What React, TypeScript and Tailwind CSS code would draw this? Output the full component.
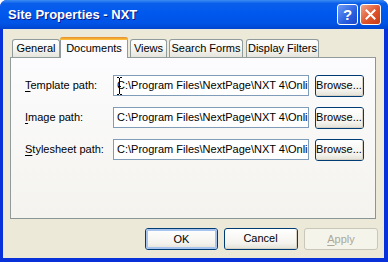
const ui = { fontFamily: '"Liberation Sans", Arial, sans-serif' };

const tabs = [
  { label: "General", w: "w-[48px]", ml: "ml-0" },
  { label: "Documents", w: "w-[68px]", ml: "ml-0", active: true },
  { label: "Views", w: "w-[37px]", ml: "ml-[2px]" },
  { label: "Search Forms", w: "w-[74px]", ml: "ml-[2px]" },
  { label: "Display Filters", w: "w-[73px]", ml: "ml-[3px]" },
];

const rows = [
  { key: "T", rest: "emplate path:", caret: true },
  { key: "I", rest: "mage path:" },
  { key: "S", rest: "tylesheet path:" },
];

function XpButton({ children, w, focus, disabled }: { children: React.ReactNode; w: string; focus?: boolean; disabled?: boolean }) {
  if (disabled) {
    return (
      <div className={`${w} h-[22px] rounded-[3px] border border-[#C9C7BA] bg-[#F5F4EA] flex items-center justify-center text-[11px] text-[#ACA899]`}>
        {children}
      </div>
    );
  }
  return (
    <div className={`${w} h-[22px] rounded-[3px] border border-[#003C74] bg-[linear-gradient(#FFFFFF,#F4F3EE_70%,#E3E1D6)] flex items-center justify-center text-[11px] text-black`}>
      <div className={`w-full h-full rounded-[2px] flex items-center justify-center ${focus ? "border-2 border-[#A8C4EE]" : "border-b border-r border-[#D6D0C5]"}`}>
        {children}
      </div>
    </div>
  );
}

export default function App() {
  return (
    <div style={ui} className="w-[388px] h-[262px] flex flex-col bg-[#0831D9] rounded-t-[7px] overflow-hidden">
      {/* title bar */}
      <div className="h-[29px] flex items-center pl-[8px] pr-[7px] bg-[linear-gradient(#3C8CF3,#0A5FEA_12%,#0058EE_45%,#0054E6_80%,#0045CF)]">
        <span className="flex-1 text-white font-bold text-[13px] [text-shadow:1px_1px_0_#0A1883]">Site Properties - NXT</span>
        <div className="w-[21px] h-[21px] rounded-[3px] border border-white bg-[linear-gradient(135deg,#6E9BF5,#2A5FE0_60%,#1B47C8)] flex items-center justify-center text-white font-bold text-[15px] leading-none">
          ?
        </div>
        <div className="ml-[2px] w-[21px] h-[21px] rounded-[3px] border border-white bg-[linear-gradient(135deg,#F0A48A,#E0532B_55%,#C63A16)] flex items-center justify-center">
          <svg width="11" height="11" viewBox="0 0 11 11">
            <path d="M1.5 1.5 L9.5 9.5 M9.5 1.5 L1.5 9.5" stroke="white" strokeWidth="2" strokeLinecap="square" />
          </svg>
        </div>
      </div>

      {/* client */}
      <div className="flex-1 ml-[3px] mr-[4px] mb-[4px] bg-[#ECE9D8] flex flex-col pt-[8px] pl-[7px] pr-[8px]">
        <div className="flex items-end h-[20px] pl-[2px] text-[11px] text-black">
          {tabs.map((t) =>
            t.active ? (
              <div key={t.label} className={`${t.w} ${t.ml} h-[21px] -mb-px z-10 relative rounded-t-[3px] border-x border-[#919B9C] bg-[#FCFCFE] flex flex-col`}>
                <div className="h-[3px] -mx-px rounded-t-[3px] bg-[linear-gradient(#E68B2C,#FFC73C)]" />
                <div className="flex-1 flex items-center justify-center pb-[1px]">{t.label}</div>
              </div>
            ) : (
              <div key={t.label} className={`${t.w} ${t.ml} h-[18px] rounded-t-[3px] border border-b-0 border-[#919B9C] bg-[linear-gradient(#FFFFFF,#F3F3EF_60%,#E5E4DC)] flex items-center justify-center`}>
                {t.label}
              </div>
            )
          )}
        </div>

        {/* tab panel */}
        <div className="h-[162px] border border-[#919B9C] border-r-[#8C9595] border-b-[#8C9595] bg-[linear-gradient(#FCFCFE,#F4F3EE)] pt-[17px] pl-[14px] flex flex-col gap-[11px] text-[11px] text-black">
          {rows.map((r) => (
            <div key={r.key} className="flex items-center h-[21px]">
              <div className="w-[88px]">
                <span className="underline underline-offset-2">{r.key}</span>
                {r.rest}
              </div>
              <div className="relative w-[196px] h-[21px] border border-[#7F9DB9] bg-white flex items-center pl-[3px] overflow-hidden whitespace-nowrap">
                C:\Program Files\NextPage\NXT 4\Online
                {r.caret && (
                  <svg className="absolute left-[3px] top-[1px]" width="5" height="18" viewBox="0 0 5 18">
                    <path d="M0 0.5 H2 M3 0.5 H5 M2.5 1 V17 M0 17.5 H2 M3 17.5 H5 M1 9.5 H4" stroke="black" strokeWidth="1" />
                  </svg>
                )}
              </div>
              <div className="ml-[6px]">
                <XpButton w="w-[49px]">Browse...</XpButton>
              </div>
            </div>
          ))}
        </div>

        {/* bottom buttons */}
        <div className="flex justify-end gap-[6px] mt-[9px] -mr-[2px]">
          <XpButton w="w-[73px]" focus>OK</XpButton>
          <XpButton w="w-[74px]">Cancel</XpButton>
          <XpButton w="w-[74px]" disabled>
            <span className="underline underline-offset-2">A</span>pply
          </XpButton>
        </div>
      </div>
    </div>
  );
}
